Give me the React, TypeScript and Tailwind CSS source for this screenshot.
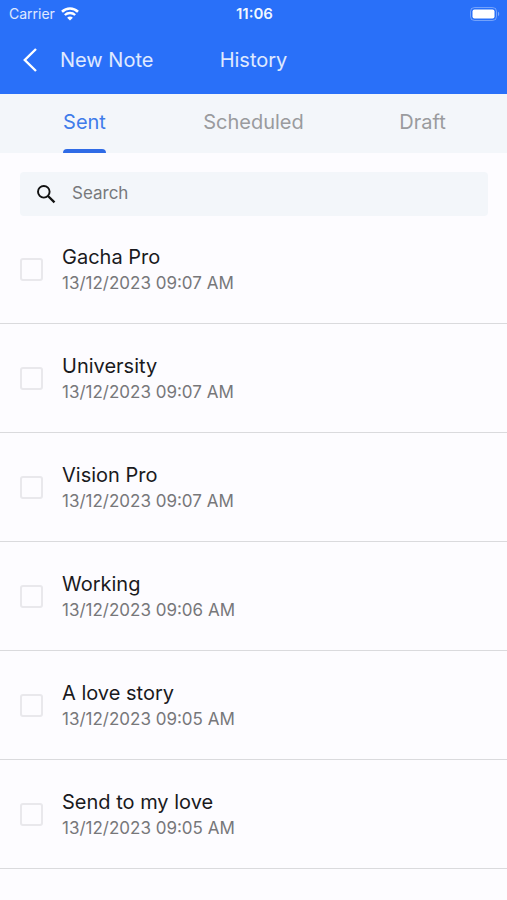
import React, { useState } from 'react';

type Note = {
  id: number;
  title: string;
  sentAt: string;
};

const TABS = ['Sent', 'Scheduled', 'Draft'] as const;

const NOTES: Note[] = [
  { id: 1, title: 'Gacha Pro', sentAt: '13/12/2023 09:07 AM' },
  { id: 2, title: 'University', sentAt: '13/12/2023 09:07 AM' },
  { id: 3, title: 'Vision Pro', sentAt: '13/12/2023 09:07 AM' },
  { id: 4, title: 'Working', sentAt: '13/12/2023 09:06 AM' },
  { id: 5, title: 'A love story', sentAt: '13/12/2023 09:05 AM' },
  { id: 6, title: 'Send to my love', sentAt: '13/12/2023 09:05 AM' },
];

function WifiIcon() {
  return (
    <svg viewBox="0 0 18 14" className="w-[18px] h-[14px]" fill="none" stroke="currentColor" aria-hidden="true">
      <path d="M1 4.7C5.6.4 12.4.4 17 4.7" strokeWidth="2.6" />
      <path d="M3.8 8c2.9-2.7 7.5-2.7 10.4 0" strokeWidth="2.3" />
      <path d="M9 13.6 6.1 10.7c1.6-1.5 4.2-1.5 5.8 0Z" fill="currentColor" stroke="none" />
    </svg>
  );
}

function BatteryIcon() {
  return (
    <svg viewBox="0 0 30 14" className="w-[30px] h-[14px]" aria-hidden="true">
      <rect x="0.5" y="0.5" width="26" height="13" rx="4" fill="none" stroke="#fff" strokeOpacity="0.35" />
      <rect x="2.5" y="2.5" width="22" height="9" rx="2" fill="#fff" />
      <path d="M28 4.8c1.6.5 1.6 3.9 0 4.4Z" fill="#fff" fillOpacity="0.4" />
    </svg>
  );
}

function StatusBar() {
  return (
    <div className="grid grid-cols-3 items-center h-7 pl-[9px] pr-[7px] text-sm">
      <div className="flex items-center gap-1.5 text-white/85">
        <span>Carrier</span>
        <span className="text-white">
          <WifiIcon />
        </span>
      </div>
      <span className="text-center text-[15px] font-semibold text-white/95">11:06</span>
      <div className="flex justify-end">
        <BatteryIcon />
      </div>
    </div>
  );
}

export default function App() {
  const [activeTab, setActiveTab] = useState<(typeof TABS)[number]>('Sent');
  const [query, setQuery] = useState('');
  const [selected, setSelected] = useState<number[]>([]);

  const visible = NOTES.filter((n) => n.title.toLowerCase().includes(query.toLowerCase()));

  const toggle = (id: number) => {
    setSelected((prev) => (prev.includes(id) ? prev.filter((x) => x !== id) : [...prev, id]));
  };

  return (
    <div className="min-h-screen bg-[#fdfcff] font-['Inter',sans-serif] text-[#1a1a1d]">
      <header className="bg-[#2970f9] pb-0.5 text-white">
        <StatusBar />
        <div className="grid grid-cols-3 items-center h-16 px-5">
          <button type="button" className="flex items-center gap-5 text-xl text-white/85 whitespace-nowrap cursor-pointer">
            <svg viewBox="0 0 20 26" className="w-5 h-[26px] shrink-0 text-white" fill="none" stroke="currentColor" aria-hidden="true">
              <path d="M16 2 4.8 13 16 24" strokeWidth="2.4" />
            </svg>
            New Note
          </button>
          <h1 className="text-center text-xl text-white/85">History</h1>
        </div>
      </header>

      <nav className="grid grid-cols-3 h-[59px] bg-[#f3f6fa]" role="tablist">
        {TABS.map((tab) => (
          <button
            key={tab}
            type="button"
            role="tab"
            aria-selected={tab === activeTab}
            onClick={() => setActiveTab(tab)}
            className={`flex flex-col items-center text-xl cursor-pointer ${
              tab === activeTab ? 'text-[#3f7cea]' : 'text-[#9a9b9e]'
            }`}
          >
            <span className="flex flex-col h-full pt-3.5">
              {tab}
              {tab === activeTab && <span className="mt-auto h-1 rounded-t bg-[#2f6be6]" />}
            </span>
          </button>
        ))}
      </nav>

      <main>
        <label className="flex items-center gap-4 h-11 ml-5 mr-[19px] mt-[19px] pl-4 rounded bg-[#f3f6fa]">
          <svg viewBox="0 0 20 20" className="w-5 h-5 shrink-0" fill="none" stroke="#111" aria-hidden="true">
            <circle cx="7.8" cy="7.8" r="5.8" strokeWidth="1.9" />
            <path d="m12 12 6.5 6.3" strokeWidth="2.3" />
          </svg>
          <input
            type="text"
            value={query}
            onChange={(e) => setQuery(e.target.value)}
            placeholder="Search"
            aria-label="Search"
            className="w-full bg-transparent text-[17px] outline-none placeholder:text-[#77797c]"
          />
        </label>

        <ul className="-mt-px">
          {visible.map((note) => (
            <li key={note.id} className="border-b border-[#dadadd]">
              <label className="flex items-start gap-[19px] px-5 py-7 cursor-pointer">
                <input
                  type="checkbox"
                  checked={selected.includes(note.id)}
                  onChange={() => toggle(note.id)}
                  className="appearance-none shrink-0 w-[23px] h-[23px] mt-[15px] rounded-[3px] border-2 border-[#e9e8ec] checked:border-[#2970f9] checked:bg-[#2970f9]"
                />
                <span className="flex flex-col">
                  <span className="text-xl leading-7">{note.title}</span>
                  <span className="text-[17px] leading-6 text-[#77777a]">{note.sentAt}</span>
                </span>
              </label>
            </li>
          ))}
        </ul>
      </main>
    </div>
  );
}
